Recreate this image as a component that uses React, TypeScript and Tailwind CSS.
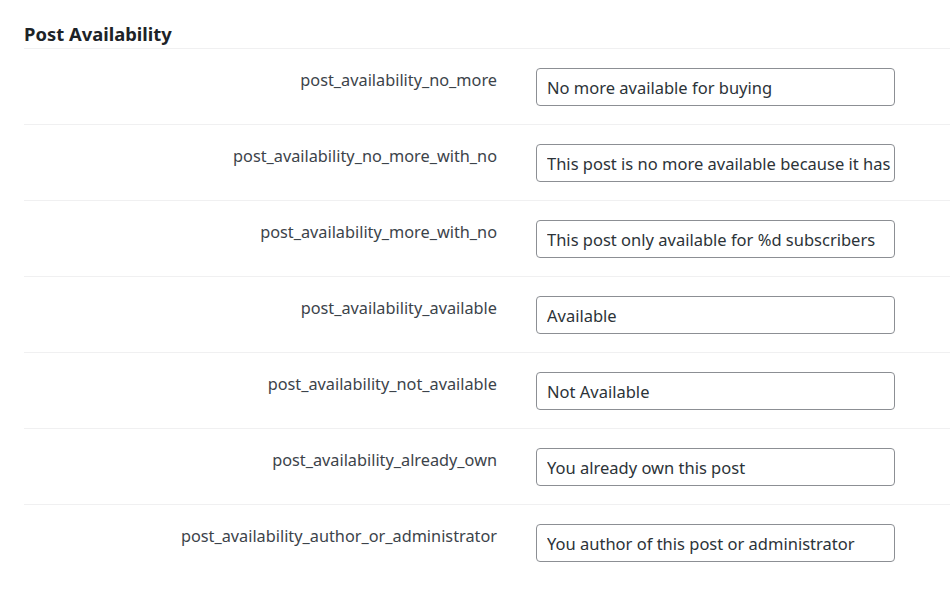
import React from "react";

const rows: [string, string][] = [
  ["post_availability_no_more", "No more available for buying"],
  ["post_availability_no_more_with_no", "This post is no more available because it has been sold out"],
  ["post_availability_more_with_no", "This post only available for %d subscribers"],
  ["post_availability_available", "Available"],
  ["post_availability_not_available", "Not Available"],
  ["post_availability_already_own", "You already own this post"],
  ["post_availability_author_or_administrator", "You author of this post or administrator"],
];

export default function App() {
  return (
    <div className="w-[950px] h-[590px] overflow-hidden bg-white pl-6" style={{ fontFamily: '"Noto Sans", "Open Sans", sans-serif' }}>
      <h2 className="pt-[22px] h-[49px] text-[18.4px] leading-[24px] font-bold text-[#1d2327] border-b border-[#f0f0f1]">
        Post Availability
      </h2>
      {rows.map(([label, value], i) => (
        <div
          key={label}
          className={`flex h-[76px] ${i < rows.length - 1 ? "border-b border-[#f0f0f1]" : ""}`}
        >
          <div className="w-[473px] shrink-0 pt-[19px] text-right text-[16.3px] leading-[24px] text-[#3c434a]">
            {label}
          </div>
          <div className="ml-[39px] pt-[19px]">
            <input
              readOnly
              value={value}
              className="w-[359px] h-[38px] rounded-[4px] border border-[#8c8f94] pl-[10px] pr-[2px] text-[16.5px] text-[#2c3338] outline-none"
              style={{ fontFamily: '"Noto Sans", "Open Sans", sans-serif' }}
            />
          </div>
        </div>
      ))}
    </div>
  );
}
